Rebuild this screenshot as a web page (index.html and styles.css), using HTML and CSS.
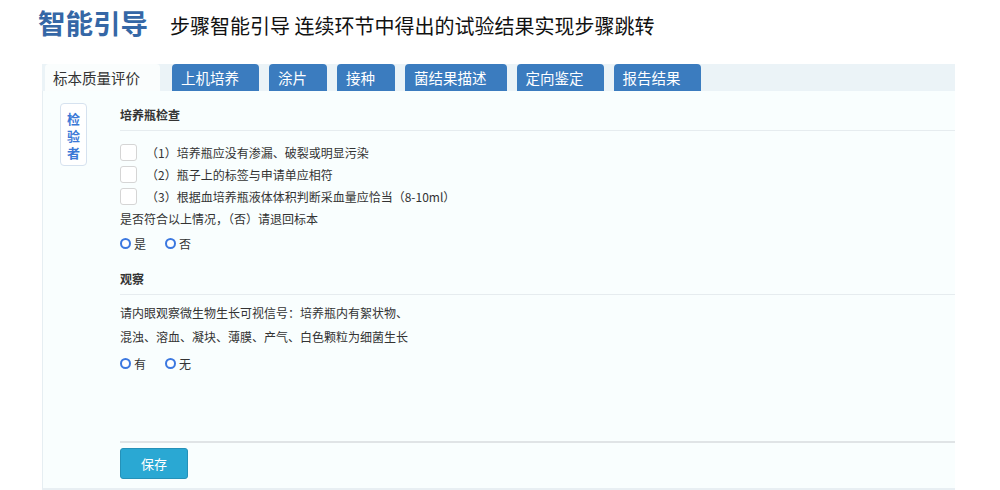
FILE: index.html
```html
<!DOCTYPE html>
<html lang="zh-CN">
<head>
  <meta charset="UTF-8">
  <title>智能引导</title>
  <link rel="stylesheet" href="styles.css">
</head>
<body>

<div class="header">
  <h1 class="title">智能引导</h1>
  <span class="subtitle">步骤智能引导 连续环节中得出的试验结果实现步骤跳转</span>
</div>

<div class="wrap">
  <!-- Tabs -->
  <div class="tabs">
    <div class="tab active">标本质量评价</div>
    <div class="tab">上机培养</div>
    <div class="tab">涂片</div>
    <div class="tab">接种</div>
    <div class="tab">菌结果描述</div>
    <div class="tab">定向鉴定</div>
    <div class="tab">报告结果</div>
  </div>

  <div class="panel">
    <div class="side">
      <div class="checker">检<br>验<br>者</div>
    </div>

    <div class="content">
      <div class="section-title">培养瓶检查</div>
      <div class="block">
        <label class="check-row"><span class="box"></span>（1）培养瓶应没有渗漏、破裂或明显污染</label>
        <label class="check-row"><span class="box"></span>（2）瓶子上的标签与申请单应相符</label>
        <label class="check-row"><span class="box"></span>（3）根据血培养瓶液体体积判断采血量应恰当（8-10ml）</label>
        <p class="line">是否符合以上情况，（否）请退回标本</p>
        <div class="radios">
          <label class="radio"><span class="dot"></span>是</label>
          <label class="radio"><span class="dot"></span>否</label>
        </div>
      </div>

      <div class="section-title">观察</div>
      <div class="block observe">
        <p class="line">请内眼观察微生物生长可视信号：培养瓶内有絮状物、</p>
        <p class="line">混浊、溶血、凝块、薄膜、产气、白色颗粒为细菌生长</p>
        <div class="radios">
          <label class="radio"><span class="dot"></span>有</label>
          <label class="radio"><span class="dot"></span>无</label>
        </div>
      </div>

      <div class="footer">
        <button class="save-btn">保存</button>
      </div>
    </div>
  </div>
</div>

</body>
</html>
```

FILE: styles.css
```css
body {
  margin: 0;
  font-family: "Noto Sans CJK SC", "Liberation Sans", sans-serif;
  background-color: #ffffff;
  color: #333;
}

.header {
  display: flex;
  align-items: baseline;
  padding: 2px 0 0 38px;
  height: 64px;
  box-sizing: border-box;
}

.title {
  margin: 0;
  font-size: 27.5px;
  font-weight: bold;
  color: #3567a6;
}

.subtitle {
  margin-left: 22px;
  font-size: 20px;
  color: #111;
}

.wrap {
  margin-left: 42px;
  width: 913px;
}

.tabs {
  display: flex;
  height: 27px;
  padding-left: 3px;
  background-color: #ebf3f7;
}

.tab {
  height: 27px;
  line-height: 27px;
  padding: 0 20px 0 9px;
  margin-right: 10px;
  font-size: 14.5px;
  color: #fff;
  background-color: #3b7cbf;
  border-radius: 4px 4px 0 0;
}

.tab.active {
  color: #333;
  background-color: #fafdfd;
  padding: 0 20px 0 8px;
  margin-right: 12px;
}

.panel {
  display: flex;
  height: 397px;
  background-color: #f9fefe;
  border-left: 1px solid #e6eef2;
  border-bottom: 2px solid #e8eff3;
}

.side {
  width: 77px;
  padding: 12px 0 0 17px;
  box-sizing: border-box;
}

.checker {
  width: 27px;
  height: 63px;
  box-sizing: border-box;
  padding-top: 6px;
  background-color: #fff;
  border: 1px solid #d6e2ef;
  border-radius: 4px;
  text-align: center;
  font-size: 13px;
  line-height: 17px;
  font-weight: bold;
  color: #3a78d6;
}

.content {
  flex: 1;
  display: flex;
  flex-direction: column;
}

.section-title {
  height: 30px;
  line-height: 30px;
  margin-top: 9px;
  font-size: 12px;
  font-weight: bold;
  color: #333;
  border-bottom: 1px solid #e6ecef;
}

.block {
  padding-top: 10px;
  font-size: 12px;
}

.check-row {
  display: flex;
  align-items: center;
  height: 22px;
}

.box {
  width: 15px;
  height: 15px;
  margin-right: 9px;
  background-color: #fff;
  border: 1px solid #d5d5d5;
  border-radius: 3px;
}

.line {
  margin: 0;
  height: 24px;
  line-height: 24px;
}

.radios {
  display: flex;
  height: 24px;
  align-items: center;
}

.radio {
  display: flex;
  align-items: center;
  margin-right: 19px;
}

.dot {
  width: 7px;
  height: 7px;
  margin-right: 3px;
  border: 2px solid #3b78e0;
  border-radius: 50%;
  background-color: #fff;
}

.observe {
  padding-top: 6px;
  height: 148px;
  box-sizing: border-box;
  border-bottom: 2px solid #e0e4e6;
}

.observe .radios {
  margin-top: 2px;
}

.footer {
  padding-top: 5px;
}

.save-btn {
  width: 68px;
  height: 31px;
  font-family: "Noto Sans CJK SC", sans-serif;
  font-size: 13px;
  color: #fff;
  background-color: #2aa8d3;
  border: 1px solid #2591b8;
  border-radius: 3px;
  cursor: pointer;
}
```
